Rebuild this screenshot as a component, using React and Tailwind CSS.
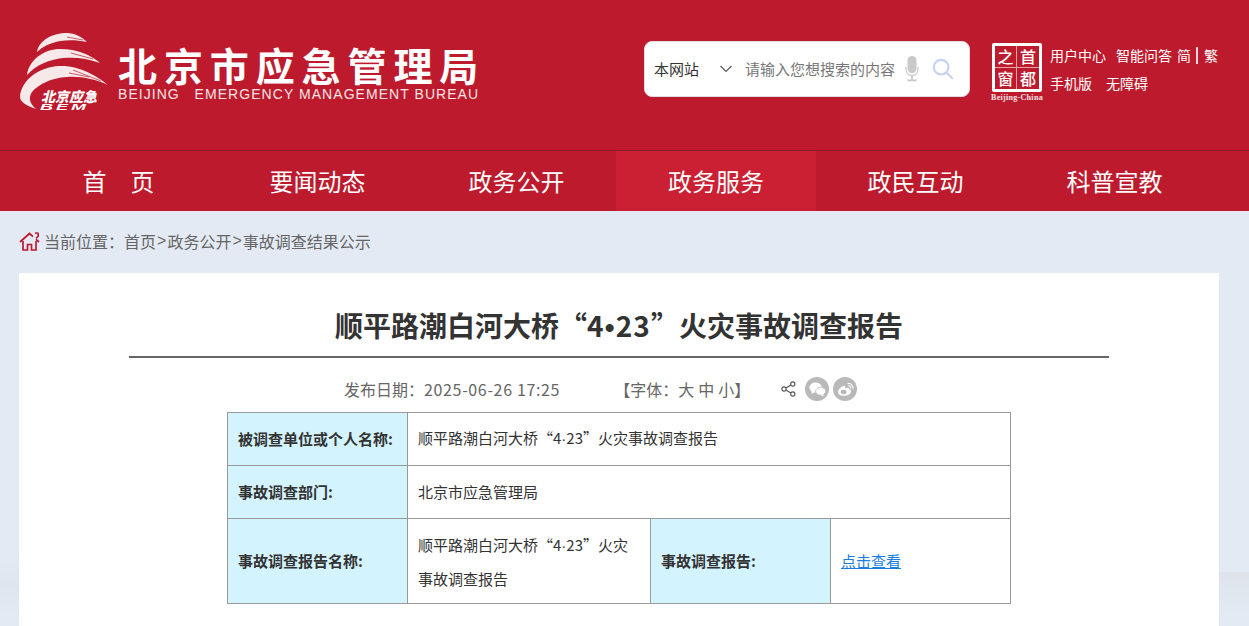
import React from "react";

const FONT = "font-['Noto_Sans_CJK_SC','Liberation_Sans',sans-serif]";

const navItems = ["首　页", "要闻动态", "政务公开", "政务服务", "政民互动", "科普宣教"];

const LogoMark = () => (
  <div className="relative w-[92px] h-[82px] shrink-0">
    <svg width="92" height="82" viewBox="0 0 92 82" className="absolute left-0 top-0">
      <path d="M18 20 C20 8 34 1 48 1 C56 1 63 5 68 10 C58 8 50 8 41 9 C32 11 24 14 18 20 Z" fill="#f7e9ea" />
      <path d="M8 43 C10 27 26 17 41 17 C58 17 72 23 81 31 C68 26 56 25 44 26 C30 28 18 32 8 43 Z" fill="#f7e9ea" />
      <path d="M1 65 C2 48 20 35 40 34 C60 33 78 44 89 53 C76 47 62 44 48 45 C32 46 20 52 13 60 C9 66 11 72 17 77 C8 74 1 70 1 65 Z" fill="#f7e9ea" />
      <path d="M48 5 L64 8 M52 21 L74 27 M54 38 L82 49 M50 41 L70 45" stroke="#bd1a2d" strokeWidth="0.7" fill="none" />
    </svg>
    <span className="absolute left-[22px] top-[58px] text-[14px] leading-[13px] font-black italic text-white whitespace-nowrap">北京应急</span>
    <span className="absolute left-[21px] top-[71px] text-[9px] leading-[9px] font-bold italic text-white tracking-[1.5px] whitespace-nowrap scale-x-[2] origin-left font-['Liberation_Sans',sans-serif]">BEM</span>
  </div>
);

const SealLogo = () => (
  <div className="flex flex-col items-center w-[54px] shrink-0">
    <div className="grid grid-cols-2 grid-rows-2 w-[50px] h-[49px] border-[3px] border-white rounded-[2px] text-[16px] leading-none font-medium text-white">
      <span className="flex items-center justify-center border-r border-b border-white/60">之</span>
      <span className="flex items-center justify-center border-b border-white/60">首</span>
      <span className="flex items-center justify-center border-r border-white/60">窗</span>
      <span className="flex items-center justify-center">都</span>
    </div>
    <span className="mt-[1px] text-[8px] leading-[9px] font-bold text-white/90 whitespace-nowrap font-['Liberation_Serif',serif] tracking-[0.3px]">Beijing-China</span>
  </div>
);

const HomeIcon = () => (
  <svg width="21" height="19" viewBox="0 0 21 19" fill="none" stroke="#bd1a2d" strokeWidth="1.7" strokeLinejoin="miter">
    <path d="M1 10 L10.5 1.5 L14 4.6 M16 1 L19 1.2 L19.3 4 L17 6.5 M20 10 L17 7.3" />
    <path d="M4 9 V18 H8.5 V12.5 H12.5 V18 H17 V9" />
  </svg>
);

const ShareIcon = () => (
  <svg width="15" height="16" viewBox="0 0 15 16" fill="none" stroke="#555" strokeWidth="1.1">
    <circle cx="3" cy="8" r="2.1" />
    <circle cx="11.8" cy="3" r="2.1" />
    <circle cx="11.8" cy="13" r="2.1" />
    <path d="M4.9 7 L9.9 4 M4.9 9 L9.9 12" />
  </svg>
);

const WechatIcon = () => (
  <svg width="17" height="15" viewBox="0 0 17 15" fill="#fff">
    <ellipse cx="6.6" cy="5.6" rx="6.2" ry="5" />
    <path d="M3 9 L2.4 12 L6 10 Z" />
    <ellipse cx="11.6" cy="9.2" rx="5" ry="4" stroke="#b9b9b9" strokeWidth="0.8" />
    <path d="M14 12 L14.8 14.4 L11.8 13 Z" />
  </svg>
);

const WeiboIcon = () => (
  <svg width="17" height="15" viewBox="0 0 17 15" fill="none">
    <path d="M6.8 13.8 C3.6 13.8 1 12.2 1 10.2 C1 7.8 4.6 4 7 3.8 C8.4 3.7 8.4 5 8 6.2 C10 5.4 12 5.4 12 7 C13.4 7.4 14 8.2 14 9.4 C14 11.8 10.8 13.8 6.8 13.8 Z" fill="#fff" />
    <ellipse cx="6.6" cy="10" rx="3" ry="2.3" fill="#b9b9b9" />
    <path d="M11 1.6 C14 1.2 16.4 3.6 15.8 6.6 M11.4 3.8 C12.8 3.6 13.9 4.7 13.6 6" stroke="#fff" strokeWidth="1.1" strokeLinecap="round" />
  </svg>
);

const Dot = ({ children }) => <span className="font-['Liberation_Sans',sans-serif]">{children}</span>;

const labelCell = "bg-[#d3f3ff] border border-[#999] px-[10px] text-[15px] font-bold text-[#333] text-left align-middle";
const valueCell = "border border-[#999] px-[10px] text-[15px] text-[#333] text-left align-middle";

export default function App() {
  return (
    <div className={`h-[626px] overflow-hidden flex flex-col bg-[#e3eaf3] ${FONT}`}>
      <header className="h-[151px] shrink-0 bg-[#bd1a2d] border-b border-[#8f1a27] flex items-start">
        <div className="flex items-center pl-[19px] pt-[32px] w-[644px] shrink-0">
          <LogoMark />
          <div className="ml-[7px] text-white -mt-[2px]">
            <div className="text-[39px] leading-[44px] font-bold tracking-[6.9px] whitespace-nowrap">北京市应急管理局</div>
            <div className="text-[14px] leading-[16px] tracking-[1.05px] whitespace-pre font-['Liberation_Sans',sans-serif] text-[#f8e4e6]">BEIJING   EMERGENCY MANAGEMENT BUREAU</div>
          </div>
        </div>

        <div className="mt-[41px] w-[326px] h-[56px] shrink-0 bg-white rounded-[8px] border border-[#ddd] flex items-center pl-[9px]">
          <span className="w-[54px] text-[15px] text-[#333] whitespace-nowrap">本网站</span>
          <svg width="14" height="8" viewBox="0 0 14 8" fill="none" stroke="#555" strokeWidth="1.1" className="ml-[11px]">
            <path d="M1.5 1 L7 6.5 L12.5 1" />
          </svg>
          <span className="ml-[12px] w-[153px] text-[15px] text-[#777] whitespace-nowrap">请输入您想搜索的内容</span>
          <svg width="14" height="28" viewBox="0 0 14 28" className="ml-[7px]" fill="#c9c9c9">
            <rect x="2.5" y="1" width="9" height="17" rx="4.5" />
            <path d="M1 12 V14 C1 18 3.5 20.5 7 20.5 C10.5 20.5 13 18 13 14 V12" fill="none" stroke="#c9c9c9" strokeWidth="1.2" />
            <rect x="6.2" y="20" width="1.6" height="5" />
            <rect x="2.5" y="24.5" width="9" height="1.8" />
          </svg>
          <svg width="22" height="22" viewBox="0 0 24 24" fill="none" stroke="#c6d3ee" strokeWidth="2.4" className="ml-[13px]">
            <circle cx="10" cy="10" r="8" />
            <path d="M16 16 L22 22" strokeLinecap="round" />
          </svg>
        </div>

        <div className="mt-[43px] ml-[20px] shrink-0">
          <SealLogo />
        </div>
        <div className="mt-[41px] ml-[6px] text-[14px] leading-[28px] text-white whitespace-nowrap">
          <div className="flex items-center">
            <span>用户中心</span>
            <span className="ml-[10px]">智能问答</span>
            <span className="ml-[5px]">简</span>
            <span className="ml-[5px] w-[2px] h-[17px] bg-[#e9d5e0]" />
            <span className="ml-[6px]">繁</span>
          </div>
          <div className="flex items-center">
            <span>手机版</span>
            <span className="ml-[14px]">无障碍</span>
          </div>
        </div>
      </header>

      <nav className="h-[60px] shrink-0 bg-[#bd1a2d] pl-[19px] grid grid-cols-[199px_199px_199px_200px_199px_199px]">
        {navItems.map((item) => (
          <a
            key={item}
            className={`flex items-center justify-center text-[24px] text-white whitespace-nowrap ${
              item === "政务服务" ? "bg-[#cb2033]" : ""
            }`}
          >
            {item}
          </a>
        ))}
      </nav>

      <main className="relative flex-1 pl-[19px] pr-[30px]">
        <div className="absolute left-0 top-[345px] w-[19px] h-[60px] bg-gradient-to-b from-[#e3eaf3] via-[#dfe5ee] to-[#e3eaf3]" />
        <div className="absolute right-0 top-[361px] w-[30px] h-[45px] bg-gradient-to-b from-[#dfe4ec] to-[#e3eaf3]" />

        <div className="h-[62px] pb-[2px] flex items-center text-[16px] text-[#666] whitespace-nowrap">
          <HomeIcon />
          <span className="ml-[4px]">当前位置：</span>
          <span>首页</span>
          <span className="mx-[1px] font-['Liberation_Sans',sans-serif]">&gt;</span>
          <span>政务公开</span>
          <span className="mx-[1px] font-['Liberation_Sans',sans-serif]">&gt;</span>
          <span>事故调查结果公示</span>
        </div>

        <section className="relative bg-white h-[400px] px-[110px]">
          <h1 className="pt-[30px] h-[85px] border-b-[2px] border-[#666] text-center text-[28px] leading-[44px] font-bold text-[#333]">
            顺平路潮白河大桥“<span className="tracking-[1.2px]">4<Dot>•</Dot>23</span>”火灾事故调查报告
          </h1>

          <div className="h-[54px] pt-[8px] flex items-center text-[16px] text-[#666] whitespace-nowrap pl-[215px]">
            <span>发布日期：<span className="tracking-[0.65px]">2025-06-26 17:25</span></span>
            <span className="ml-[54px] flex">
              <span>【字体：</span>
              <span>大</span>
              <span className="ml-[4px]">中</span>
              <span className="ml-[4px]">小</span>
              <span>】</span>
            </span>
            <span className="ml-[31px]"><ShareIcon /></span>
            <span className="ml-[9px] w-[24px] h-[24px] rounded-full bg-[#b9b9b9] flex items-center justify-center"><WechatIcon /></span>
            <span className="ml-[4px] w-[24px] h-[24px] rounded-full bg-[#b9b9b9] flex items-center justify-center"><WeiboIcon /></span>
          </div>

          <table className="ml-[98px] w-[783px] border-collapse table-fixed">
            <colgroup>
              <col className="w-[180px]" />
              <col className="w-[243px]" />
              <col className="w-[180px]" />
              <col className="w-[180px]" />
            </colgroup>
            <tbody>
              <tr className="h-[53px]">
                <th className={labelCell}>被调查单位或个人名称:</th>
                <td className={valueCell} colSpan={3}>顺平路潮白河大桥“4<Dot>·</Dot>23”火灾事故调查报告</td>
              </tr>
              <tr className="h-[53px]">
                <th className={labelCell}>事故调查部门:</th>
                <td className={valueCell} colSpan={3}>北京市应急管理局</td>
              </tr>
              <tr className="h-[85px]">
                <th className={labelCell}>事故调查报告名称:</th>
                <td className={`${valueCell} leading-[33px]`}>顺平路潮白河大桥“4<Dot>·</Dot>23”火灾事故调查报告</td>
                <th className={labelCell}>事故调查报告:</th>
                <td className={valueCell}>
                  <a className="text-[#1a7ee0] underline">点击查看</a>
                </td>
              </tr>
            </tbody>
          </table>
        </section>
      </main>
    </div>
  );
}
